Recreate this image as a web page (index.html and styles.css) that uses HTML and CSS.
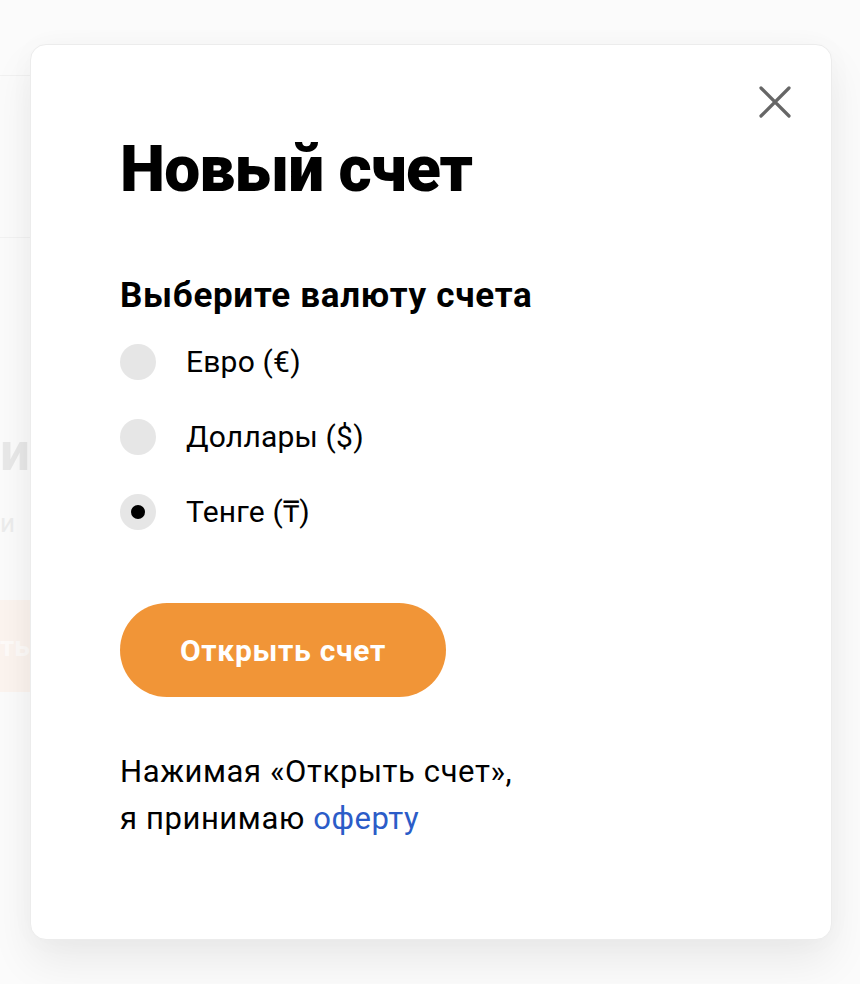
FILE: index.html
```html
<!DOCTYPE html>
<html lang="ru">
<head>
<meta charset="utf-8">
<title>Новый счет</title>
<link rel="stylesheet" href="styles.css">
</head>
<body>
<div class="backdrop">
  <div class="bg-header"></div>
  <div class="bg-section"></div>
  <div class="bg-content">
    <div class="bg-title">и</div>
    <div class="bg-text">и</div>
    <div class="bg-button">ть</div>
  </div>
</div>

<div class="modal" role="dialog" aria-label="Новый счет">
  <button class="close" aria-label="Закрыть">
    <svg width="32" height="32" viewBox="0 0 32 32" fill="none" stroke="#666" stroke-width="3.2" stroke-linecap="round"><path d="M2 2L30 30M30 2L2 30"/></svg>
  </button>
  <h1 class="title">Новый счет</h1>
  <h2 class="subtitle">Выберите валюту счета</h2>
  <div class="options">
    <label class="option"><span class="radio"></span><span class="label">Евро (€)</span></label>
    <label class="option"><span class="radio"></span><span class="label">Доллары ($)</span></label>
    <label class="option"><span class="radio checked"></span><span class="label">Тенге (₸)</span></label>
  </div>
  <button class="open">Открыть счет</button>
  <p class="note">Нажимая «Открыть счет»,<br>я принимаю <a href="#">оферту</a></p>
</div>
</body>
</html>
```

FILE: styles.css
```css
html, body {
  margin: 0;
  padding: 0;
}
body {
  background: #fbfbfb;
  font-family: Roboto, "Liberation Sans", sans-serif;
  color: #000;
  width: 860px;
  height: 984px;
  overflow: hidden;
  position: relative;
}

/* faded page behind the dialog */
.backdrop {
  display: flex;
  flex-direction: column;
}
.bg-header {
  width: 400px;
  height: 75px;
  border-bottom: 1px solid #f1f1f1;
}
.bg-section {
  width: 400px;
  height: 161px;
  border-bottom: 1px solid #f2f2f2;
}
.bg-content {
  display: flex;
  flex-direction: column;
  align-items: flex-start;
  padding-top: 184px;
}
.bg-title {
  font-size: 53px;
  font-weight: 700;
  color: #e8e8e8;
  line-height: 60px;
}
.bg-text {
  font-size: 26px;
  color: #ececec;
  line-height: 30px;
  margin-top: 26px;
}
.bg-button {
  margin-top: 62px;
  height: 92px;
  width: 30px;
  display: flex;
  align-items: center;
  background: #fcf4ef;
  color: #fefbf9;
  font-size: 28px;
  font-weight: 700;
}

/* dialog */
.modal {
  position: absolute;
  left: 30px;
  top: 44px;
  width: 802px;
  height: 896px;
  box-sizing: border-box;
  background: #fff;
  border: 1px solid #ececec;
  border-radius: 16px;
  box-shadow: 0 22px 44px rgba(0, 0, 0, 0.07), 0 0 30px rgba(0, 0, 0, 0.025);
  padding: 93px 40px 0 89px;
}
.close {
  position: absolute;
  top: 41px;
  right: 40px;
  width: 32px;
  height: 32px;
  padding: 0;
  border: 0;
  background: none;
  cursor: pointer;
}
.close svg {
  display: block;
}
.title {
  margin: 0;
  font-size: 64px;
  line-height: 64px;
  font-weight: 900;
  letter-spacing: -0.8px;
}
.subtitle {
  margin: 74px 0 0;
  font-size: 35px;
  line-height: 40px;
  font-weight: 700;
  letter-spacing: 0.7px;
}
.options {
  margin-top: 28px;
  display: flex;
  flex-direction: column;
  gap: 39px;
}
.option {
  display: flex;
  align-items: center;
  gap: 30px;
  height: 36px;
}
.radio {
  width: 36px;
  height: 36px;
  border-radius: 50%;
  background: #e6e6e6;
  display: flex;
  align-items: center;
  justify-content: center;
  flex: none;
}
.radio.checked::after {
  content: "";
  width: 14px;
  height: 14px;
  border-radius: 50%;
  background: #000;
}
.label {
  font-size: 30px;
  line-height: 36px;
  letter-spacing: 0.2px;
}
.open {
  margin-top: 73px;
  display: block;
  width: 326px;
  height: 94px;
  border: 0;
  border-radius: 47px;
  background: #f19537;
  color: #fff;
  font-family: inherit;
  font-size: 30px;
  font-weight: 700;
  letter-spacing: 0.7px;
  cursor: pointer;
}
.note {
  margin: 51px 0 0;
  font-size: 31px;
  line-height: 47px;
  letter-spacing: 0.6px;
}
.note a {
  color: #2b5cc8;
  text-decoration: none;
}
```
